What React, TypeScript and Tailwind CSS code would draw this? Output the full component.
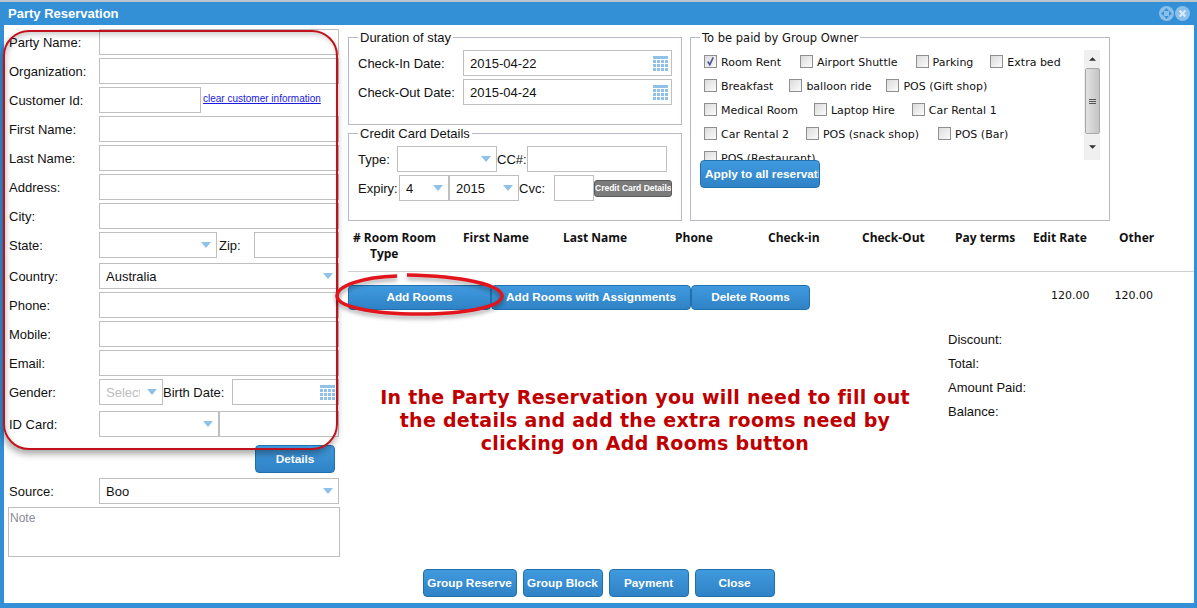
const arial = "font-['Liberation_Sans',Arial,sans-serif]"

function Chevron() {
  return (
    <svg viewBox="0 0 10 6" className="w-[10px] h-[6px] shrink-0">
      <path d="M0 0H10L5 6Z" fill="#8fc1e9" />
    </svg>
  )
}

function CalendarIcon() {
  return (
    <svg viewBox="0 0 15 15" className="w-[15px] h-[15px] shrink-0">
      <rect x="0" y="0" width="15" height="15" fill="#8fc1e9" />
      <path d="M3.5 3V15M7.5 3V15M11.5 3V15M0 3.5H15M0 7.5H15M0 11.5H15" stroke="#fff" strokeWidth="1" />
    </svg>
  )
}

function TextBox({ className = "", children }: { className?: string; children?: React.ReactNode }) {
  return (
    <div className={"h-[26px] border border-[#bfbfbf] bg-white flex items-center pl-[6px] shrink-0 overflow-hidden " + className}>
      {children}
    </div>
  )
}

function SelectBox({ value, className = "", muted = false }: { value?: string; className?: string; muted?: boolean }) {
  return (
    <div className={"h-[26px] border border-[#bfbfbf] bg-white flex items-center justify-between pl-[6px] pr-[5px] shrink-0 " + className}>
      <span className={"pt-[1px] overflow-hidden whitespace-nowrap " + (muted ? "text-[#bdbdbd] w-[34px]" : "")}>{value}</span>
      <Chevron />
    </div>
  )
}

function DateBox({ value, className = "" }: { value?: string; className?: string }) {
  return (
    <div className={"h-[26px] border border-[#bfbfbf] bg-white flex items-center justify-between pl-[6px] pr-[3px] shrink-0 " + className}>
      <span className="pt-[1px]">{value}</span>
      <CalendarIcon />
    </div>
  )
}

function BlueButton({ children, className = "" }: { children: React.ReactNode; className?: string }) {
  return (
    <button className={"block shrink-0 border border-[#2170ae] rounded-[4px] bg-gradient-to-b from-[#419ade] to-[#2f82c6] text-white font-bold text-[11.8px] pt-[1px] whitespace-nowrap overflow-hidden " + className}>
      {children}
    </button>
  )
}

function Row({ label, children, className = "mb-[3px]" }: { label: string; children: React.ReactNode; className?: string }) {
  return (
    <div className={"flex items-center h-[26px] " + className}>
      <span className="w-[95px] shrink-0 pl-[5px] pt-[1px]">{label}</span>
      {children}
    </div>
  )
}

function Check({ label, checked = false, gap }: { label: string; checked?: boolean; gap: string }) {
  return (
    <div className={"flex items-center shrink-0 " + gap}>
      <span className="w-[13px] h-[13px] border border-[#8f8f8f] bg-gradient-to-br from-[#dcdcdc] to-[#fbfbfb] flex items-center justify-center mr-[4px] -mt-[1px]">
        {checked && (
          <svg viewBox="0 0 12 12" className="w-[11px] h-[11px]">
            <path d="M3 6L5.2 9.5L9 1.5" fill="none" stroke="#4a5a9c" strokeWidth="1.8" />
          </svg>
        )}
      </span>
      <span className="whitespace-nowrap pt-[2px]">{label}</span>
    </div>
  )
}

const checkRows = [
  [["Room Rent", "mr-[19px]", true], ["Airport Shuttle", "mr-[18px]"], ["Parking", "mr-[17px]"], ["Extra bed", ""]],
  [["Breakfast", "mr-[16px]"], ["balloon ride", "mr-[15px]"], ["POS (Gift shop)", ""]],
  [["Medical Room", "mr-[16px]"], ["Laptop Hire", "mr-[17px]"], ["Car Rental 1", ""]],
  [["Car Rental 2", "mr-[17px]"], ["POS (snack shop)", "mr-[19px]"], ["POS (Bar)", ""]],
  [["POS (Restaurant)", ""]],
] as [string, string, boolean?][][]

function Fieldset({ title, className = "", legendClass = "", children }: { title: string; className?: string; legendClass?: string; children: React.ReactNode }) {
  return (
    <fieldset className={"border border-[#b8b8c8] pl-[9px] pr-[9px] pt-[5px] min-w-0 " + className}>
      <legend className={"px-[2px] h-[16px] leading-[18px] " + legendClass}>{title}</legend>
      {children}
    </fieldset>
  )
}

export default function App() {
  return (
    <div className={"relative w-[1197px] h-[608px] overflow-hidden bg-[#338fd6] flex flex-col text-[13px] text-[#111] " + arial}>
      <div className="h-[2px] bg-[#b9c4cc] shrink-0" />
      <div className="h-[23px] shrink-0 flex items-center justify-between pl-[8px] pr-[7px]">
        <span className="text-white font-bold text-[13px]">Party Reservation</span>
        <div className="flex items-center gap-[1px]">
          <svg viewBox="0 0 15 15" className="w-[15px] h-[15px]">
            <circle cx="7.5" cy="7.5" r="7.5" fill="#8bbfe9" />
            <path d="M7.5 2L10 5H5ZM7.5 13L5 10H10ZM2 7.5L5 5V10ZM13 7.5L10 10V5Z" fill="#338fd6" />
          </svg>
          <svg viewBox="0 0 15 15" className="w-[15px] h-[15px]">
            <circle cx="7.5" cy="7.5" r="7.5" fill="#8bbfe9" />
            <path d="M4.5 4.5L10.5 10.5M10.5 4.5L4.5 10.5" stroke="#d8e9f7" strokeWidth="2.2" />
          </svg>
        </div>
      </div>

      <div className="ml-[4px] mr-[3px] h-[578px] bg-white flex flex-col shrink-0">
        <div className="flex h-[544px] shrink-0">
          <div className="w-[344px] shrink-0 pt-[4px]">
            <Row label="Party Name:"><TextBox className="w-[240px]" /></Row>
            <Row label="Organization:"><TextBox className="w-[240px]" /></Row>
            <Row label="Customer Id:">
              <TextBox className="w-[102px]" />
              <a className="ml-[2px] text-[10px] text-[#1a1ae0] underline whitespace-nowrap -mt-[3px]">clear customer information</a>
            </Row>
            <Row label="First Name:"><TextBox className="w-[240px]" /></Row>
            <Row label="Last Name:"><TextBox className="w-[240px]" /></Row>
            <Row label="Address:"><TextBox className="w-[240px]" /></Row>
            <Row label="City:"><TextBox className="w-[240px]" /></Row>
            <Row label="State:" className="mb-[5px]">
              <SelectBox className="w-[118px]" />
              <span className="w-[37px] pl-[2px] pt-[1px] shrink-0">Zip:</span>
              <TextBox className="w-[85px]" />
            </Row>
            <Row label="Country:"><SelectBox value="Australia" className="w-[240px]" /></Row>
            <Row label="Phone:"><TextBox className="w-[240px]" /></Row>
            <Row label="Mobile:"><TextBox className="w-[240px]" /></Row>
            <Row label="Email:"><TextBox className="w-[240px]" /></Row>
            <Row label="Gender:" className="mb-[6px]">
              <SelectBox value="Select" muted className="w-[64px]" />
              <span className="w-[69px] pt-[1px] shrink-0">Birth Date:</span>
              <DateBox className="w-[107px]" />
            </Row>
            <Row label="ID Card:" className="mb-[8px]">
              <SelectBox className="w-[120px]" />
              <TextBox className="w-[120px]" />
            </Row>
            <BlueButton className="ml-[251px] w-[80px] h-[28px]">Details</BlueButton>
            <Row label="Source:" className="mt-[5px] mb-[3px]"><SelectBox value="Boo" className="w-[240px]" /></Row>
            <div className="ml-[4px] w-[332px] h-[50px] border border-[#bfbfbf] text-[#8a8a9a] text-[12px] pt-[1px] pl-[1px]">Note</div>
          </div>

          <div className="flex-1 min-w-0 pt-[4px]">
            <div className="flex gap-[8px]">
              <div className="w-[334px] shrink-0">
                <Fieldset title="Duration of stay" className="h-[96px]">
                  <div className="flex items-center mb-[3px]">
                    <span className="w-[105px] pt-[1px] shrink-0">Check-In Date:</span>
                    <DateBox value="2015-04-22" className="w-[209px]" />
                  </div>
                  <div className="flex items-center">
                    <span className="w-[105px] pt-[1px] shrink-0">Check-Out Date:</span>
                    <DateBox value="2015-04-24" className="w-[209px]" />
                  </div>
                </Fieldset>
                <Fieldset title="Credit Card Details" className="h-[96px]">
                  <div className="flex items-center mb-[3px]">
                    <span className="w-[39px] pt-[1px] shrink-0">Type:</span>
                    <SelectBox className="w-[100px]" />
                    <span className="w-[30px] pt-[1px] shrink-0">CC#:</span>
                    <TextBox className="w-[140px]" />
                  </div>
                  <div className="flex items-center">
                    <span className="w-[41px] pt-[1px] shrink-0">Expiry:</span>
                    <SelectBox value="4" className="w-[50px]" />
                    <SelectBox value="2015" className="w-[70px]" />
                    <span className="w-[35px] pt-[1px] shrink-0">Cvc:</span>
                    <TextBox className="w-[40px]" />
                    <button className="w-[78px] h-[17px] rounded-[3px] border border-[#5c5c5c] bg-[#7b7b7b] text-white font-bold text-[8.5px] whitespace-nowrap overflow-hidden">Credit Card Details</button>
                  </div>
                </Fieldset>
              </div>
              <Fieldset title="To be paid by Group Owner" legendClass="text-[11.5px]" className="w-[420px] h-[192px] relative font-['DejaVu_Sans',sans-serif] text-[11px]">
                <div className="flex">
                  <div className="w-[384px] h-[110px] overflow-hidden pl-[4px] shrink-0">
                    {checkRows.map((row, i) => (
                      <div key={i} className="flex items-center h-[24px]">
                        {row.map(([label, gap, checked]) => (
                          <Check key={label} label={label} gap={gap} checked={checked} />
                        ))}
                      </div>
                    ))}
                  </div>
                  <div className="w-[16px] h-[110px] bg-[#f0f0f0] flex flex-col items-center shrink-0">
                    <div className="h-[18px] flex items-center">
                      <svg viewBox="0 0 8 4" className="w-[7px] h-[4px]"><path d="M4 0L8 4H0Z" fill="#333" /></svg>
                    </div>
                    <div className="w-[15px] h-[66px] border border-[#a8a8a8] rounded-[2px] bg-gradient-to-r from-[#e2e2e2] to-[#c4c4c4] flex flex-col items-center justify-center gap-[1px]">
                      <span className="w-[7px] h-px bg-[#555]" />
                      <span className="w-[7px] h-px bg-[#555]" />
                      <span className="w-[7px] h-px bg-[#555]" />
                    </div>
                    <div className="flex-1 flex items-center">
                      <svg viewBox="0 0 8 4" className="w-[7px] h-[4px]"><path d="M0 0H8L4 4Z" fill="#333" /></svg>
                    </div>
                  </div>
                </div>
                <BlueButton className={"w-[120px] h-[28px] text-left pl-[4px] " + arial}>Apply to all reservations</BlueButton>
              </Fieldset>
            </div>

            <div className="grid grid-cols-[110px_100px_112px_93px_94px_93px_78px_86px_60px] h-[51px] pt-[9px] font-['Open_Sans',sans-serif] font-bold text-[12px] leading-[16px] border-b border-[#cfcfcf] whitespace-nowrap pl-[5px]">
              <div>
                <div># Room Room</div>
                <div className="pl-[17px]">Type</div>
              </div>
              <div>First Name</div>
              <div>Last Name</div>
              <div>Phone</div>
              <div>Check-in</div>
              <div>Check-Out</div>
              <div>Pay terms</div>
              <div>Edit Rate</div>
              <div>Other</div>
            </div>

            <div className="flex items-start mt-[13px]">
              <div className="flex">
                <BlueButton className="w-[143px] h-[25px]">Add Rooms</BlueButton>
                <BlueButton className="w-[200px] h-[25px]">Add Rooms with Assignments</BlueButton>
                <BlueButton className="w-[119px] h-[25px]">Delete Rooms</BlueButton>
              </div>
              <span className="ml-[241px] mt-[3px] font-['DejaVu_Sans',sans-serif] text-[11px]">120.00</span>
              <span className="ml-[25px] mt-[3px] font-['DejaVu_Sans',sans-serif] text-[11px]">120.00</span>
            </div>

            <div className="flex mt-[18px]">
              <div className="w-[594px] shrink-0 pt-[58px] text-center font-['DejaVu_Sans',sans-serif] font-bold text-[#c00000] text-[19px] leading-[23px] tracking-[0.28px]">
                In the Party Reservation you will need to fill out
                <br />
                the details and add the extra rooms need by
                <br />
                clicking on Add Rooms button
              </div>
              <div className="pl-[6px] leading-[24px]">
                <div>Discount:</div>
                <div>Total:</div>
                <div>Amount Paid:</div>
                <div>Balance:</div>
              </div>
            </div>
          </div>
        </div>

        <div className="flex justify-center gap-[6px] pl-[3px] ml-[-4px]">
          <BlueButton className="w-[94px] h-[28px]">Group Reserve</BlueButton>
          <BlueButton className="w-[80px] h-[28px]">Group Block</BlueButton>
          <BlueButton className="w-[80px] h-[28px]">Payment</BlueButton>
          <BlueButton className="w-[80px] h-[28px]">Close</BlueButton>
        </div>
      </div>

      <div className="absolute left-[3px] top-[30px] w-[335px] h-[420px] border-2 border-[#c0121c] rounded-[26px] shadow-[-1px_4px_7px_rgba(0,0,0,0.35),inset_2px_3px_5px_rgba(0,0,0,0.18)] pointer-events-none" />
      <svg viewBox="0 0 175 50" className="absolute left-[332px] top-[271px] w-[175px] h-[50px] pointer-events-none drop-shadow-[0_3px_2px_rgba(0,0,0,0.35)]">
        <path d="M65 5C30 6 5 15 5 25C5 35 37 43 87 43C137 43 170 35 170 25C170 14 130 5 75 4" fill="none" stroke="#e2141c" strokeWidth="3.5" />
      </svg>
    </div>
  )
}
